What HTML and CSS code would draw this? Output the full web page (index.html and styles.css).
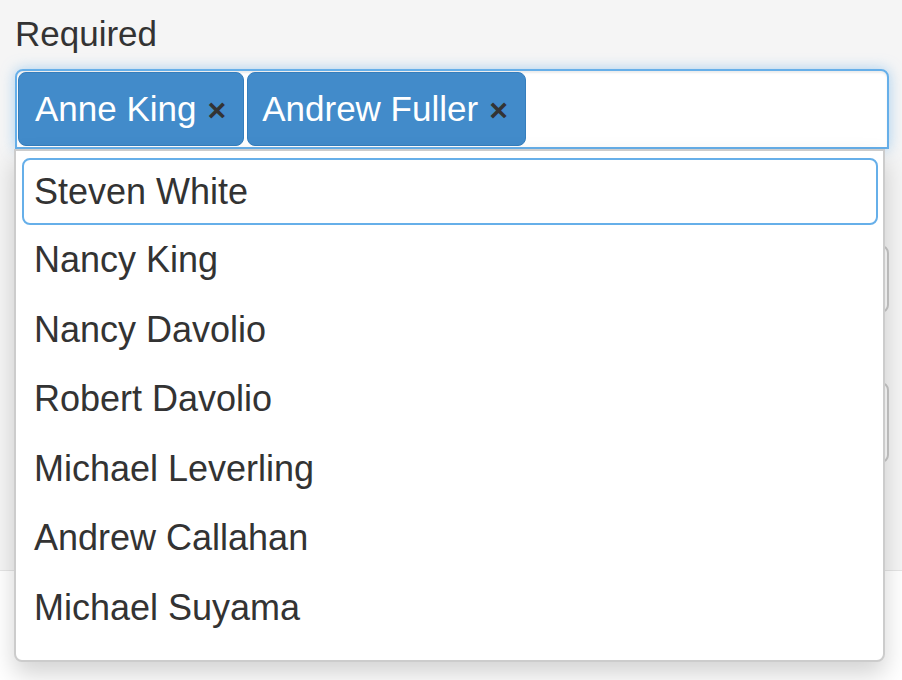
FILE: index.html
```html
<!DOCTYPE html>
<html>
<head>
<meta charset="utf-8">
<link rel="stylesheet" href="styles.css">
</head>
<body>
<div class="panel">
  <div class="label">Required</div>
  <div class="select-wrap">
    <div class="select">
      <span class="tag">Anne King<span class="remove">×</span></span>
      <span class="tag tag-b">Andrew Fuller<span class="remove">×</span></span>
    </div>
    <div class="dropdown">
      <div class="search">Steven White</div>
      <ul class="options">
        <li>Nancy King</li>
        <li>Nancy Davolio</li>
        <li>Robert Davolio</li>
        <li>Michael Leverling</li>
        <li>Andrew Callahan</li>
        <li>Michael Suyama</li>
      </ul>
    </div>
  </div>
  <div class="field field-1"></div>
  <div class="field field-2"></div>
</div>
<div class="footer"></div>
</body>
</html>
```

FILE: styles.css
```css
html, body {
  margin: 0;
  padding: 0;
}
body {
  background: #f5f5f5;
  font-family: "Liberation Sans", Arial, sans-serif;
  color: #333;
  width: 902px;
  height: 680px;
  overflow: hidden;
}
.panel {
  box-sizing: border-box;
  height: 570px;
  padding: 10px 13px 0 15px;
}
.label {
  font-size: 35px;
  line-height: 48px;
  height: 48px;
  margin-bottom: 11px;
}
.select-wrap {
  position: relative;
}
.select {
  box-sizing: border-box;
  height: 80px;
  border: 2px solid #66afe9;
  border-radius: 8px 8px 0 0;
  background: #fff;
  box-shadow: inset 0 2px 2px rgba(0,0,0,.075), 0 0 14px rgba(102,175,233,.55);
  padding: 1px;
  display: flex;
  gap: 3px;
}
.tag {
  box-sizing: border-box;
  height: 74px;
  display: flex;
  align-items: center;
  background: #428bca;
  border: 1px solid #357ebd;
  border-radius: 8px;
  color: #fff;
  font-size: 35px;
  padding: 0 17px 0 16px;
}
.tag-b {
  padding-left: 14px;
}
.remove {
  color: #333;
  font-weight: bold;
  font-size: 32px;
  margin-left: 11px;
  position: relative;
  top: 1px;
}
.dropdown {
  position: absolute;
  top: 80px;
  left: -1px;
  width: 871px;
  height: 513px;
  box-sizing: border-box;
  background: #fff;
  border: 2px solid #cccccc;
  border-radius: 0 0 8px 8px;
  box-shadow: 0 12px 24px rgba(0,0,0,.175);
  padding: 7px 5px 0 6px;
  z-index: 5;
}
.search {
  box-sizing: border-box;
  height: 67px;
  border: 2px solid #66afe9;
  border-radius: 8px;
  padding: 0 10px;
  font-size: 36px;
  line-height: 63px;
}
.options {
  list-style: none;
  margin: 0;
  padding: 0;
}
.options li {
  font-size: 36px;
  line-height: 49.6px;
  padding: 10px 12px;
}
.field {
  box-sizing: border-box;
  border: 2px solid #c8c8c8;
  border-radius: 8px;
  background: #fff;
}
.field-1 {
  margin-top: 96px;
  height: 68px;
}
.field-2 {
  margin-top: 69px;
  height: 81px;
}
.footer {
  height: 110px;
  background: #fff;
  border-top: 1px solid #e5e5e5;
}
```
